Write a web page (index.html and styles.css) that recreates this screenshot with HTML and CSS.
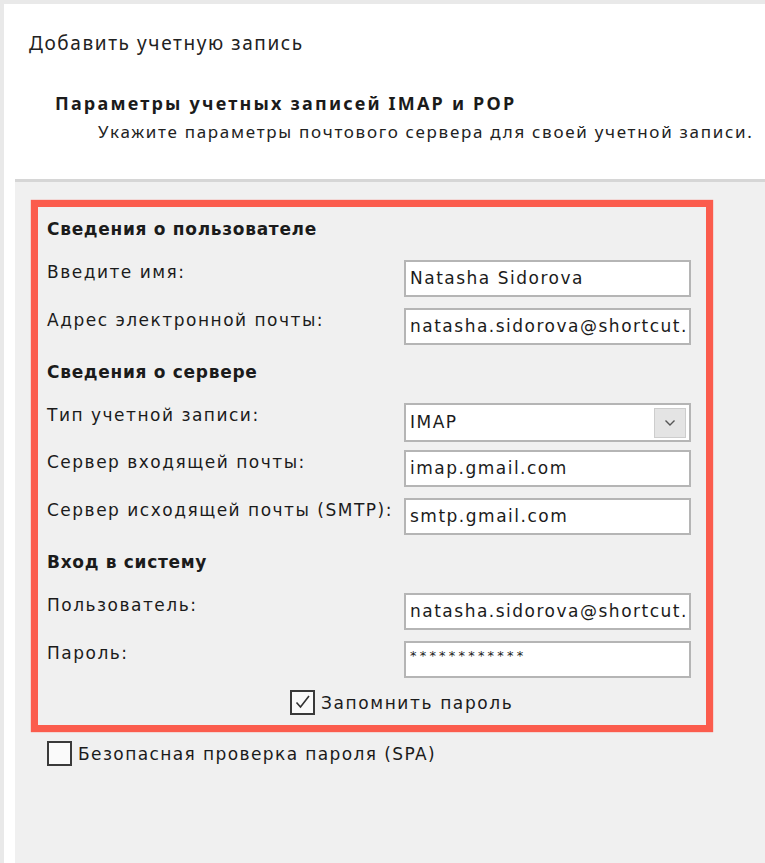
FILE: index.html
```html
<!DOCTYPE html>
<html lang="ru">
<head>
<meta charset="utf-8">
<title>Добавить учетную запись</title>
<link rel="stylesheet" href="styles.css">
</head>
<body>
<div class="window">
  <header class="head">
    <div class="win-title">Добавить учетную запись</div>
    <div class="page-title">Параметры учетных записей IMAP и POP</div>
    <div class="page-sub">Укажите параметры почтового сервера для своей учетной записи.</div>
  </header>
  <main class="body">
    <section class="hl">
      <div class="sec">Сведения о пользователе</div>
      <div class="row"><span class="lbl">Введите имя:</span><div class="field">Natasha Sidorova</div></div>
      <div class="row"><span class="lbl">Адрес электронной почты:</span><div class="field">natasha.sidorova@shortcut.</div></div>
      <div class="sec">Сведения о сервере</div>
      <div class="row row-sel"><span class="lbl">Тип учетной записи:</span>
        <div class="field select"><span>IMAP</span>
          <span class="drop"><svg width="12" height="8" viewBox="0 0 12 8"><path d="M1.5 1.5 L6 6 L10.5 1.5" fill="none" stroke="#555" stroke-width="1.4"/></svg></span>
        </div>
      </div>
      <div class="row"><span class="lbl">Сервер входящей почты:</span><div class="field">imap.gmail.com</div></div>
      <div class="row"><span class="lbl">Сервер исходящей почты (SMTP):</span><div class="field">smtp.gmail.com</div></div>
      <div class="sec">Вход в систему</div>
      <div class="row"><span class="lbl">Пользователь:</span><div class="field">natasha.sidorova@shortcut.</div></div>
      <div class="row"><span class="lbl">Пароль:</span><div class="field pass">************</div></div>
      <div class="remember">
        <span class="cb"><svg width="19" height="19" viewBox="0 0 19 19"><path d="M3.5 9.5 L7.5 14 L16 3" fill="none" stroke="#333" stroke-width="1.6"/></svg></span>
        <span class="cb-text">Запомнить пароль</span>
      </div>
    </section>
    <div class="spa">
      <span class="cb"></span>
      <span class="cb-text">Безопасная проверка пароля (SPA)</span>
    </div>
  </main>
</div>
</body>
</html>
```

FILE: styles.css
```css
* { box-sizing: border-box; }
html, body { margin: 0; padding: 0; }
body {
  width: 765px;
  height: 863px;
  overflow: hidden;
  background: #e9e9e9;
  font-family: "DejaVu Sans", "Noto Sans", sans-serif;
  color: #1b1b1b;
}
.window {
  margin: 4px 0 0 4px;
  height: 859px;
  background: #ffffff;
  display: flex;
  flex-direction: column;
}
.head {
  height: 175px;
  padding: 28px 0 0 25px;
}
.win-title {
  font-family: "Noto Sans", sans-serif;
  font-size: 19px;
  line-height: 22px;
  letter-spacing: 1.6px;
  color: #222;
}
.page-title {
  margin: 38px 0 0 26px;
  font-family: "Noto Sans", sans-serif;
  font-size: 18px;
  font-weight: 700;
  line-height: 22px;
  letter-spacing: 2.2px;
}
.page-sub {
  margin: 7px 0 0 69px;
  font-family: "Noto Sans", sans-serif;
  font-size: 17px;
  line-height: 22px;
  letter-spacing: 1.7px;
  color: #222;
}
.body {
  flex: 1;
  margin-left: 11px;
  background: #f0f0f0;
  border-top: 3px solid #d6d6d6;
  padding: 18px 0 0 16px;
}
.hl {
  width: 682px;
  border: 7px solid #fb5c4d;
  box-shadow: 0 0 1px #fb5c4d;
  padding: 12px 15px 10px 9px;
  display: flex;
  flex-direction: column;
}
.sec {
  font-size: 17px;
  font-weight: 700;
  line-height: 20px;
  letter-spacing: 0.7px;
  margin: 17px 0 10px;
}
.sec:first-child { margin-top: 0; }
.row {
  display: flex;
  justify-content: space-between;
  align-items: flex-start;
  margin-top: 11px;
  height: 37px;
}
.row-sel { height: 39px; }
.row-sel + .row { margin-top: 8px; }
.lbl {
  font-size: 17px;
  line-height: 20px;
  letter-spacing: 1.5px;
  padding-top: 2px;
  white-space: nowrap;
}
.field {
  width: 287px;
  height: 100%;
  background: #fff;
  border: 2px solid #b5b5b5;
  font-size: 17px;
  line-height: 20px;
  letter-spacing: 1.5px;
  padding: 6px 0 0 4px;
  white-space: nowrap;
  overflow: hidden;
  flex: none;
}
.field.pass {
  font-size: 13px;
  padding-top: 3px;
  letter-spacing: 3.2px;
}
.select {
  display: flex;
  justify-content: space-between;
  padding-right: 3px;
  padding-top: 3px;
}
.select > span:first-child { padding-top: 4px; }
.drop {
  width: 32px;
  height: 30px;
  background: #e4e4e4;
  border: 1px solid #cdcdcd;
  display: flex;
  align-items: center;
  justify-content: center;
}
.remember {
  display: flex;
  align-items: center;
  margin: 12px 0 0 243px;
  height: 25px;
}
.cb {
  width: 25px;
  height: 25px;
  border: 2px solid #3a3a3a;
  background: #fafafa;
  display: flex;
  align-items: center;
  justify-content: center;
  flex: none;
}
.cb-text {
  font-size: 17px;
  line-height: 20px;
  letter-spacing: 1.6px;
  margin-left: 6px;
}
.spa {
  display: flex;
  align-items: center;
  margin: 9px 0 0 16px;
  height: 25px;
}
.spa .cb-text { letter-spacing: 1.4px; }
```
